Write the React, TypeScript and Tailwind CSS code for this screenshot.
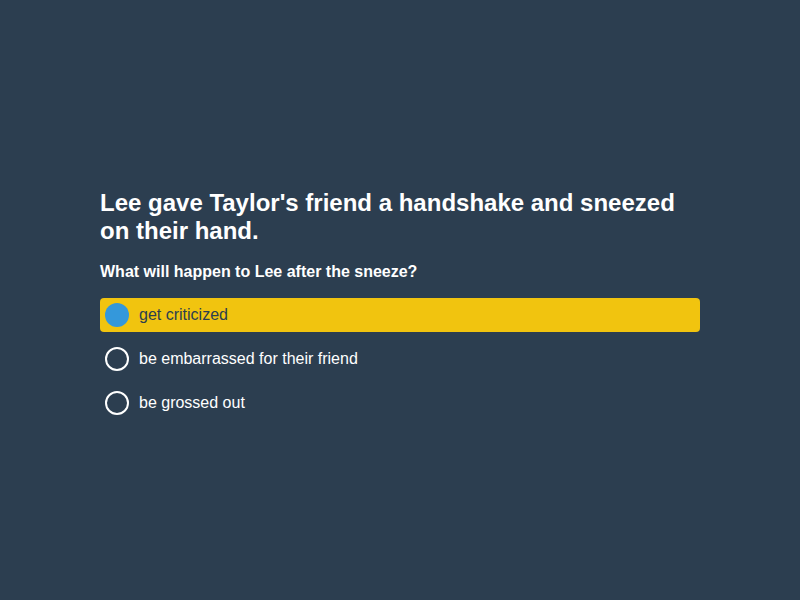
const options = ["get criticized", "be embarrassed for their friend", "be grossed out"];

export default function App() {
  const selected = 0;
  return (
    <div
      className="w-[800px] h-[600px] bg-[#2c3e50] flex justify-center pt-[189px] text-white"
      style={{ fontFamily: '"Liberation Sans", Arial, sans-serif' }}
    >
      <div className="w-[600px]">
        <h1 className="text-[24px] leading-[28px] font-bold">
          Lee gave Taylor's friend a handshake and sneezed on their hand.
        </h1>
        <p className="mt-[18px] text-[16px] leading-[18px] font-bold">What will happen to Lee after the sneeze?</p>
        <div className="mt-[17px] flex flex-col gap-[10px]">
          {options.map((opt, i) => (
            <div
              key={opt}
              className={
                "h-[34px] flex items-center gap-[10px] pl-[5px] rounded-[4px] text-[16px] " +
                (i === selected ? "bg-[#f1c40f] text-[#2c3e50]" : "")
              }
            >
              <span
                className={
                  "w-[24px] h-[24px] rounded-full " +
                  (i === selected ? "bg-[#3498db]" : "border-2 border-white")
                }
              />
              <span>{opt}</span>
            </div>
          ))}
        </div>
      </div>
    </div>
  );
}
